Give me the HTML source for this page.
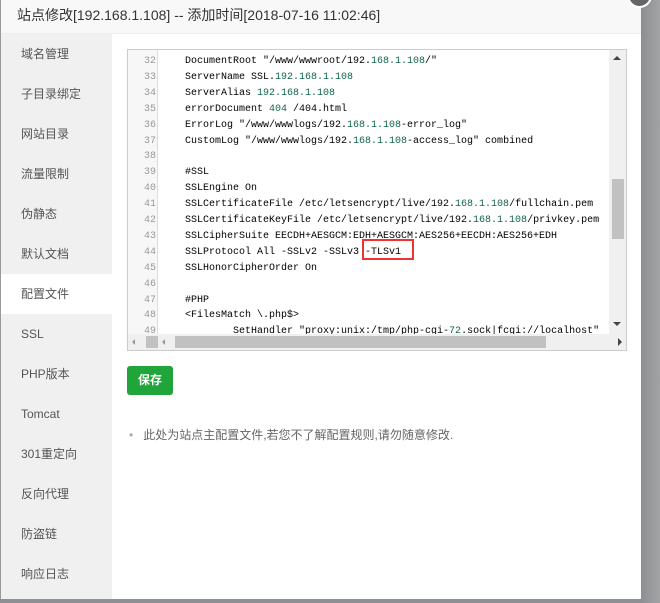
<!DOCTYPE html>
<html><head><meta charset="utf-8"><style>
*{margin:0;padding:0;box-sizing:border-box}
body{width:660px;height:603px;overflow:hidden;background:#8e8f92;font-family:"Liberation Sans","Noto Sans CJK SC",sans-serif;position:relative}
.bg{position:absolute;left:641px;top:0;width:19px;height:603px;background:linear-gradient(90deg,#8d8e91,#a3a4a6)}
.dlg{position:absolute;left:0;top:0;width:641px;height:599px;background:#fff;border-left:1px solid #999}
.title{height:34px;background:#f8f8f8;border-bottom:1px solid #eee;font-size:14px;color:#333;line-height:30px;padding-left:16px}
.close{position:absolute;left:627px;top:-17px;width:25px;height:25px;border-radius:50%;background:#666;border:2px solid #fff}
.side{position:absolute;left:0;top:34px;width:111px;height:565px;background:#f0f0f0}
.side div{height:40px;line-height:40px;padding-left:20px;font-size:12px;color:#555}
.side div.on{background:#fff}
.ed{position:absolute;left:126px;top:49px;width:500px;height:302px;border:1px solid #ccc;background:#fff;overflow:hidden}
.gut{position:absolute;left:0;top:0;width:30px;height:285px;background:#f7f7f7;border-right:1px solid #ddd}
.ln{position:absolute;left:0;width:28px;text-align:right;font:10px "Liberation Mono",monospace;color:#999}
.code{position:absolute;left:57px;white-space:pre;font:10px "Liberation Mono",monospace;color:#000}
.n{color:#164}
.vs{position:absolute;left:481px;top:0;width:17px;height:285px;background:#f0f0f0}
.hs{position:absolute;left:0;top:284px;width:498px;height:16px;background:#f0f0f0}
.btn{position:absolute;left:126px;top:366px;width:46px;height:29px;background:#20a53a;border-radius:3px;color:#fff;font-size:12px;font-weight:bold;text-align:center;line-height:29px}
.note{position:absolute;left:128px;top:426px;font-size:12px;color:#666}
</style></head><body>
<div class="bg"></div>
<div class="dlg">
<div class="title">站点修改[192.168.1.108] -- 添加时间[2018-07-16 11:02:46]</div>
<div class="side">
<div>域名管理</div><div>子目录绑定</div><div>网站目录</div><div>流量限制</div><div>伪静态</div><div>默认文档</div><div class="on">配置文件</div><div>SSL</div><div>PHP版本</div><div>Tomcat</div><div>301重定向</div><div>反向代理</div><div>防盗链</div><div>响应日志</div>
</div>
<div class="ed">
<div class="gut"></div>
<div id="lines"></div>
<div class="vs"><div style="position:absolute;left:4px;top:6px;width:0;height:0;border-left:4px solid transparent;border-right:4px solid transparent;border-bottom:4px solid #444"></div><div style="position:absolute;left:3px;top:129px;width:12px;height:60px;background:#c1c1c1"></div><div style="position:absolute;left:4px;top:272px;border-left:4px solid transparent;border-right:4px solid transparent;border-top:4px solid #444"></div></div>
<div class="hs"><div style="position:absolute;left:4px;top:5px;border-top:3px solid transparent;border-bottom:3px solid transparent;border-right:3px solid #999"></div><div style="position:absolute;left:18px;top:2px;width:12px;height:12px;background:#c1c1c1"></div><div style="position:absolute;left:34px;top:5px;border-top:3px solid transparent;border-bottom:3px solid transparent;border-right:3px solid #999"></div><div style="position:absolute;left:47px;top:2px;width:371px;height:12px;background:#c1c1c1"></div><div style="position:absolute;left:490px;top:4px;border-top:4px solid transparent;border-bottom:4px solid transparent;border-left:4px solid #444"></div></div>
<div style="position:absolute;left:234px;top:189px;width:52px;height:21px;border:2px solid #e33"></div>
</div>
<div class="btn">保存</div>
<div class="note"><span style="color:#aaa;margin-right:10px">•</span>此处为站点主配置文件,若您不了解配置规则,请勿随意修改.</div>
</div>
<div class="close"></div>
<script>
var L=['DocumentRoot "/www/wwwroot/192.<span class=n>168.1.108</span>/"','ServerName SSL.<span class=n>192.168.1.108</span>','ServerAlias <span class=n>192.168.1.108</span>','errorDocument <span class=n>404</span> /404.html','ErrorLog "/www/wwwlogs/192.<span class=n>168.1.108</span>-error_log"','CustomLog "/www/wwwlogs/192.<span class=n>168.1.108</span>-access_log" combined','','#SSL','SSLEngine On','SSLCertificateFile /etc/letsencrypt/live/192.<span class=n>168.1.108</span>/fullchain.pem','SSLCertificateKeyFile /etc/letsencrypt/live/192.<span class=n>168.1.108</span>/privkey.pem','SSLCipherSuite EECDH+AESGCM:EDH+AESGCM:AES256+EECDH:AES256+EDH','SSLProtocol All -SSLv2 -SSLv3 -TLSv1','SSLHonorCipherOrder On','','#PHP','&lt;FilesMatch \\.php$&gt;','        SetHandler "proxy:unix:/tmp/php-cgi-<span class=n>72</span>.sock|fcgi://localhost"'];
var h='';for(var i=0;i<L.length;i++){var t=6+i*15.9;h+='<div class="ln" style="top:'+t+'px">'+(32+i)+'</div><div class="code" style="top:'+t+'px">'+L[i]+'</div>';}
document.getElementById('lines').innerHTML=h;
</script>
</body></html>
